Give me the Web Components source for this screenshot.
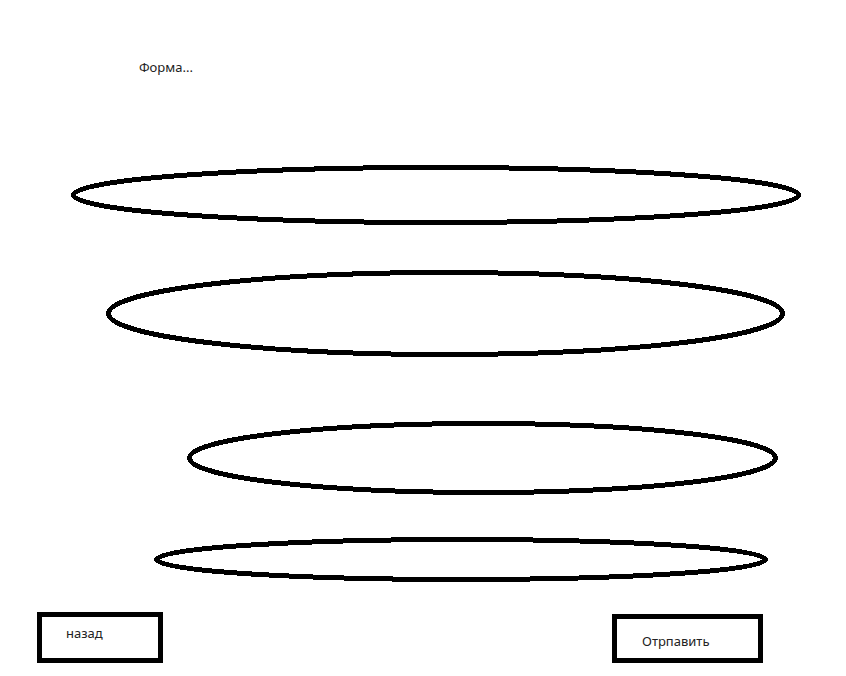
<!DOCTYPE html>
<html lang="ru">
<head>
<meta charset="utf-8">
<meta name="viewport" content="width=device-width, initial-scale=1">
<title>Форма</title>
<style>
body { margin: 0; background: #fff; color: #222; font: 13px/20px "Noto Sans", "Open Sans", sans-serif; }
</style>
</head>
<body>
<form-page></form-page>

<template id="oval-field">
  <style>
    :host { display: grid; }
    svg, input { grid-area: 1 / 1; width: 100%; height: 100%; min-width: 0; }
    svg { display: block; }
    ellipse {
      cx: 50%; cy: 50%;
      rx: calc((100% - 5px) / 2); ry: calc((100% - 5px) / 2);
      fill: none; stroke: #000; stroke-width: 5px;
      shape-rendering: crispEdges;
    }
    input {
      box-sizing: border-box; margin: 0; padding: 0 48px; border: 0;
      border-radius: 50%; background: transparent; color: inherit; font: inherit; outline: none;
    }
    input:focus-visible { background: #0000000d; }
  </style>
  <svg aria-hidden="true"><ellipse/></svg>
  <input type="text">
</template>

<template id="box-button">
  <style>
    :host { display: block; }
    button {
      box-sizing: border-box; width: 100%; height: 100%; margin: 0;
      padding: var(--pad, 0 24px); border: 5px solid #000; border-radius: 0;
      background: #fff; color: inherit; font: inherit; text-align: left; cursor: pointer;
    }
  </style>
  <button type="button"><slot></slot></button>
</template>

<template id="form-page">
  <style>
    :host { display: block; }
    form { display: flex; flex-direction: column; margin: 0; padding: 57px 0 12px; }
    h1 { margin: 0 0 88px 139px; font: inherit; }
    .a { height: 60px; margin: 0 45px 45px 71px; }
    .b { height: 87px; margin: 0 61px 64px 106px; }
    .c { height: 74px; margin: 0 68px 42px 187px; }
    .d { height: 45px; margin: 0 78px 30px 154px; }
    footer { display: flex; justify-content: space-between; align-items: flex-end; padding: 0 83px 0 37px; }
    .back { width: 126px; height: 51px; --pad: 0 24px 10px; }
    .send { width: 151px; height: 49px; --pad: 4px 24px 0 25px; }
  </style>
  <form>
    <h1>Форма...</h1>
    <oval-field class="a" label="Поле 1"></oval-field>
    <oval-field class="b" label="Поле 2"></oval-field>
    <oval-field class="c" label="Поле 3"></oval-field>
    <oval-field class="d" label="Поле 4"></oval-field>
    <footer>
      <box-button class="back">назад</box-button>
      <box-button class="send">Отрпавить</box-button>
    </footer>
  </form>
</template>

<script>
class TemplateElement extends HTMLElement {
  constructor() {
    super();
    const template = document.getElementById(this.localName);
    this.attachShadow({ mode: "open" }).append(document.importNode(template.content, true));
  }
}
class OvalField extends TemplateElement {
  connectedCallback() {
    this.shadowRoot.querySelector("input").setAttribute("aria-label", this.getAttribute("label") || "");
  }
}
class BoxButton extends TemplateElement {}
class FormPage extends TemplateElement {}
customElements.define("oval-field", OvalField);
customElements.define("box-button", BoxButton);
customElements.define("form-page", FormPage);
</script>
</body>
</html>
